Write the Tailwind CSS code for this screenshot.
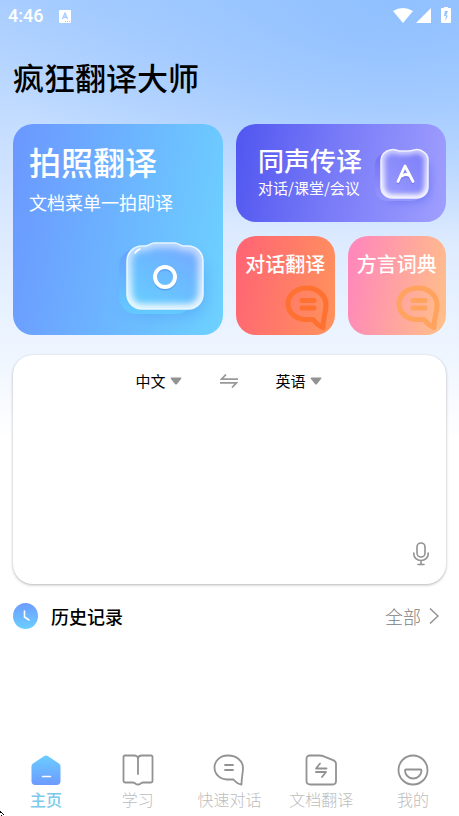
<!DOCTYPE html>
<html lang="zh-CN">
<head>
  <meta charset="UTF-8" />
  <meta name="viewport" content="width=device-width, initial-scale=1.0"/>
  <title>疯狂翻译大师</title>
  <script src="https://cdn.jsdelivr.net/npm/@tailwindcss/browser@4"></script>
</head>
<body class="bg-white font-['Noto_Sans_CJK_SC',sans-serif] text-black">
  <div class="relative flex min-h-screen flex-col bg-[radial-gradient(ellipse_90%_30%_at_85%_0%,#90c0ff_0%,#90c0ff00_100%),linear-gradient(180deg,#a9ceff_0px,#bfdaff_100px,#dceaff_230px,#eef5ff_350px,#ffffff_440px)]">

    <!-- Status bar -->
    <header class="flex h-8 items-center justify-between pr-2 pl-2 text-white">
      <div class="flex items-center gap-4">
        <span class="font-[Roboto,sans-serif] text-lg font-medium">4:46</span>
        <svg class="h-[13px] w-3" viewBox="0 0 12 13" aria-hidden="true">
          <rect width="12" height="13" rx="1" fill="#fff"/>
          <path d="M3.4 9 6 3.2 8.6 9M4.300 7.200h3.400" fill="none" stroke="#a9ccff" stroke-width="1.400"/>
          <path d="M6 11.500h1M8 11.500h1M10 11.500h1" stroke="#a9ccff"/>
        </svg>
      </div>
      <svg class="h-[18px] w-[58px]" viewBox="0 1 58 18" fill="#fff" aria-hidden="true">
        <path d="M0 5Q10-1 20 5L10 17Z"/>
        <path d="M23 17 38 2v15Z"/>
        <path fill-rule="evenodd" d="M51 0h4v2h2a1 1 0 0 1 1 1v13a1 1 0 0 1-1 1h-8a1 1 0 0 1-1-1V3a1 1 0 0 1 1-1h2ZM52 5 51 10h2l-1 5 3-5.500h-2L55 5Z"/>
      </svg>
    </header>

    <main class="flex flex-col px-[13px]">
      <h1 class="mt-6 text-[31px] leading-[42px] font-medium">疯狂翻译大师</h1>

      <!-- Feature cards -->
      <section class="mt-[26px] grid grid-cols-2 gap-[13px] text-white">
        <a href="#photo" class="relative flex h-[211px] flex-col rounded-[20px] bg-linear-[100deg,#6b97ff,#6dd2ff] px-4 pt-4">
          <span class="text-[32px] leading-[42px] font-medium">拍照翻译</span>
          <span class="mt-[6px] text-lg leading-7">文档菜单一拍即译</span>
          <svg class="absolute right-0 bottom-0 h-[115px] w-[120px]" viewBox="0 0 120 115" aria-hidden="true">
            <defs>
              <linearGradient id="camBack" x1="0" y1="0" x2="0" y2="1">
                <stop offset="0" stop-color="#67a2ff"/><stop offset="1" stop-color="#63caff"/>
              </linearGradient>
              <linearGradient id="camFace" x1=".9" y1="0" x2=".3" y2="1">
                <stop offset="0" stop-color="#7aa8ff"/><stop offset=".45" stop-color="#6cb8ff"/><stop offset="1" stop-color="#68ccff"/>
              </linearGradient>
              <linearGradient id="camEdge" x1="0" y1="0" x2="0" y2="1">
                <stop offset="0" stop-color="#fff" stop-opacity=".6"/><stop offset="1" stop-color="#fff"/>
              </linearGradient>
              <filter id="camShadow" x="-40%" y="-40%" width="180%" height="180%"><feGaussianBlur stdDeviation="8"/></filter>
              <filter id="camGlow"><feGaussianBlur stdDeviation="3.500"/></filter>
              <path id="camBody" d="M39 26h3c5 0 5-3 9-3h21c4 0 4 3 9 3h4a15 15 0 0 1 15 15v33a15 15 0 0 1-15 15H39a15 15 0 0 1-15-15V41a15 15 0 0 1 15-15Z"/>
              <clipPath id="camClip"><use href="#camBody"/></clipPath>
            </defs>
            <rect x="24" y="38" width="78" height="58" rx="18" fill="#4a90ef" opacity=".45" filter="url(#camShadow)"/>
            <rect x="16" y="29" width="74" height="65" rx="17" fill="url(#camBack)"/>
            <use href="#camBody" fill="url(#camFace)"/>
            <g clip-path="url(#camClip)">
              <use href="#camBody" fill="none" stroke="url(#camEdge)" stroke-width="9" filter="url(#camGlow)"/>
            </g>
            <use href="#camBody" fill="none" stroke="#e6f6ff" stroke-width="1.600"/>
            <path d="M32 33q2-3 5-4" stroke="#fff" stroke-width="1.500" stroke-linecap="round" fill="none"/>
            <circle cx="62" cy="58.500" r="10" fill="none" stroke="#4a8ff0" stroke-width="4" opacity=".6"/>
            <circle cx="62" cy="57" r="10" fill="none" stroke="#fff" stroke-width="4"/>
          </svg>
        </a>

        <div class="flex flex-col gap-[14px]">
          <a href="#interpret" class="relative flex h-[98px] flex-col rounded-[20px] bg-linear-[100deg,#5056f0,#7b7df8_50%,#a09fff] pt-[18px] pl-[22px]">
            <span class="text-[26px] leading-[36px] font-medium">同声传译</span>
            <span class="text-[15px] leading-5 whitespace-nowrap">对话/课堂/会议</span>
            <svg class="absolute top-2 right-0 h-[80px] w-[80px]" viewBox="0 0 80 80" aria-hidden="true">
              <defs>
                <linearGradient id="aFace" x1="1" y1="0" x2="0" y2="1">
                  <stop offset="0" stop-color="#7a7cf8"/><stop offset="1" stop-color="#9d9dff"/>
                </linearGradient>
                <linearGradient id="aBack" x1="0" y1="0" x2="0" y2="1">
                  <stop offset="0" stop-color="#6f70f5"/><stop offset="1" stop-color="#9696ff"/>
                </linearGradient>
                <linearGradient id="aEdge" x1="0" y1="0" x2="0" y2="1">
                  <stop offset="0" stop-color="#fff" stop-opacity=".65"/><stop offset="1" stop-color="#fff"/>
                </linearGradient>
                <filter id="aShadow" x="-40%" y="-40%" width="180%" height="180%"><feGaussianBlur stdDeviation="5"/></filter>
                <filter id="aGlow"><feGaussianBlur stdDeviation="2.500"/></filter>
                <path id="aBody" d="M24 18q3-1 6 0 2 1 5 1h7q3 0 6-1 3-1 6 0c5 2 8 6 8 10v27a11 11 0 0 1-11 11H26a11 11 0 0 1-11-11V28c0-5 4-9 9-10Z"/>
                <clipPath id="aClip"><use href="#aBody"/></clipPath>
              </defs>
              <rect x="18" y="28" width="46" height="42" rx="12" fill="#5568ee" opacity=".55" filter="url(#aShadow)"/>
              <rect x="9" y="21" width="48" height="48" rx="12" fill="url(#aBack)"/>
              <use href="#aBody" fill="url(#aFace)"/>
              <g clip-path="url(#aClip)">
                <use href="#aBody" fill="none" stroke="url(#aEdge)" stroke-width="7" filter="url(#aGlow)"/>
              </g>
              <use href="#aBody" fill="none" stroke="#f0efff" stroke-width="1.500"/>
              <g fill="none" stroke-linecap="round" stroke-linejoin="round" stroke-width="2.800">
                <path d="m32 51 7-15.500L47 51M36 45.500q4-3 8 0" stroke="#6464e6" opacity=".5"/>
                <path d="m32 49.500 7-15.500L47 49.500M36 44q4-3 8 0" stroke="#fff"/>
              </g>
            </svg>
          </a>

          <div class="grid grid-cols-2 gap-[13px]">
            <a href="#dialog" class="relative h-[99px] rounded-[20px] bg-linear-[100deg,#ff6375,#ff935c] pt-[13px] text-center text-xl leading-[30px] font-medium whitespace-nowrap">
              对话翻译
              <svg class="absolute right-[6px] bottom-1 h-[46px] w-[44px]" viewBox="0 0 44 46" fill="none" stroke="#ff7130" stroke-linecap="round" stroke-linejoin="round" aria-hidden="true">
                <path d="M38 42.500C33 41 30 36 28 34.500H19C10 33.500 3 27 3 19 3 9 12 3 22 3s19 7 19 17c0 8-3 12-3 22.500Z" stroke-width="5"/>
                <path d="M17 15.500h12M17 23h12" stroke-width="5"/>
              </svg>
            </a>
            <a href="#dialect" class="relative h-[99px] rounded-[20px] bg-linear-[100deg,#ff84bd,#ffc187] pt-[13px] text-center text-xl leading-[30px] font-medium whitespace-nowrap">
              方言词典
              <svg class="absolute right-[6px] bottom-1 h-[46px] w-[44px]" viewBox="0 0 44 46" fill="none" stroke="#ffa35e" stroke-linecap="round" stroke-linejoin="round" aria-hidden="true">
                <path d="M38 42.500C33 41 30 36 28 34.500H19C10 33.500 3 27 3 19 3 9 12 3 22 3s19 7 19 17c0 8-3 12-3 22.500Z" stroke-width="5"/>
                <path d="M17 15.500h12M17 23h12" stroke-width="5"/>
              </svg>
            </a>
          </div>
        </div>
      </section>

      <!-- Translate box -->
      <section class="mt-5 flex h-[229px] flex-col rounded-[20px] bg-white shadow-[0_1px_3px_rgba(0,0,0,0.3)]">
        <div class="flex items-center justify-center gap-[38px] pt-3 pr-[2px]">
          <button type="button" class="flex items-center gap-1 text-[15px] leading-7">
            中文
            <svg class="h-2 w-3" viewBox="0 0 12 8" aria-hidden="true"><path d="M1.500.5h9q1.500 0 .7 1.300L7 7q-1 1-2 0L.8 1.800Q0 .5 1.500.5Z" fill="#929292"/></svg>
          </button>
          <button type="button" aria-label="交换语言">
            <svg class="h-[14px] w-[18px]" viewBox="0 0 18 14" fill="none" stroke="#999" stroke-width="1.800" aria-hidden="true">
              <path d="M6 .5 1.500 5.200H18M0 8.800h16.500L12 13.500"/>
            </svg>
          </button>
          <button type="button" class="flex items-center gap-1 text-[15px] leading-7">
            英语
            <svg class="h-2 w-3" viewBox="0 0 12 8" aria-hidden="true"><path d="M1.500.5h9q1.500 0 .7 1.300L7 7q-1 1-2 0L.8 1.800Q0 .5 1.500.5Z" fill="#929292"/></svg>
          </button>
        </div>
        <textarea aria-label="翻译内容" class="w-full flex-1 resize-none px-4 py-2 text-base outline-none"></textarea>
        <button type="button" aria-label="语音输入" class="mr-[17px] mb-[18px] self-end">
          <svg class="h-6 w-4" viewBox="0 0 16 24" fill="none" stroke="#929292" stroke-width="1.600" stroke-linecap="round" aria-hidden="true">
            <rect x="4" y="1" width="8" height="14" rx="4"/>
            <path d="M.8 11v1a7.200 6.500 0 0 0 14.400 0v-1M8 18.500V22.500M5 22.500h6"/>
          </svg>
        </button>
      </section>

      <!-- History -->
      <section class="mt-[19px] flex items-center justify-between pr-[7px]">
        <div class="flex items-center gap-[13px]">
          <svg class="h-[26px] w-[25px]" viewBox="0 0 25 26" aria-hidden="true">
            <defs>
              <linearGradient id="clock" x1="0" y1="0" x2="0" y2="1"><stop offset="0" stop-color="#6d9bff"/><stop offset="1" stop-color="#6acfff"/></linearGradient>
            </defs>
            <ellipse cx="12.500" cy="13" rx="12.500" ry="13" fill="url(#clock)"/>
            <path d="M11.500 8v6l4.500 3" fill="none" stroke="#fff" stroke-width="1.600" stroke-linecap="round"/>
          </svg>
          <h2 class="text-lg leading-[26px] font-medium">历史记录</h2>
        </div>
        <a href="#history" class="flex items-center gap-2 text-lg leading-[26px] font-light text-[#808080]">
          全部
          <svg class="h-4 w-[10px]" viewBox="0 0 10 16" fill="none" stroke="#929292" stroke-width="1.500" aria-hidden="true"><path d="m1 .5 8 7.500-8 7.500"/></svg>
        </a>
      </section>
    </main>

    <!-- Tab bar -->
    <nav class="mt-auto grid grid-cols-5 pt-4 pb-[5px] text-base leading-6 font-light whitespace-nowrap text-[#bdbdbd]">
      <a href="#home" class="flex flex-col items-center gap-px font-medium text-[#7cc9ec]">
        <svg class="h-8 w-8" viewBox="0 0 32 32" aria-hidden="true">
          <defs>
            <linearGradient id="home" x1="0" y1="0" x2="0" y2="1"><stop offset="0" stop-color="#6bcdff"/><stop offset="1" stop-color="#6c9aff"/></linearGradient>
          </defs>
          <path d="M13.500 2.500q2.500-1.800 5 0L29 9.500q1.500 1 1.500 3V27q0 4-4 4h-21q-4 0-4-4V12.500q0-2 1.500-3Z" fill="url(#home)"/>
          <path d="M12.500 22.500h8" stroke="#fff" stroke-width="1.500" stroke-linecap="round"/>
        </svg>
        主页
      </a>
      <a href="#study" class="flex flex-col items-center gap-px">
        <svg class="h-8 w-8" viewBox="0 0 32 32" fill="none" stroke="#929292" stroke-width="1.800" stroke-linecap="round" stroke-linejoin="round" aria-hidden="true">
          <path d="M16 20V5q0-3.500-4-3.500H3Q1.500 1.500 1.500 3v24q0 1.500 1.500 1.500h8q1.500 0 2.500 1.200 2.500 1.600 5 0Q19.500 28.500 21 28.500h8q1.500 0 1.500-1.500V3q0-1.500-1.500-1.500h-9q-4 0-4 3.500"/>
        </svg>
        学习
      </a>
      <a href="#quick" class="flex flex-col items-center gap-px">
        <svg class="h-8 w-8" viewBox="0 0 32 32" fill="none" stroke="#929292" stroke-width="1.800" stroke-linecap="round" stroke-linejoin="round" aria-hidden="true">
          <path d="M28.500 30.500C24.500 30 22.500 28 20.500 25.500H14C7 25.500 1.500 20 1.500 13.500S7 1.500 14.500 1.500h1C23 1.500 30 6.500 30 14c0 5-1.500 9-1.500 16.500ZM12 11h8M12 16h8"/>
        </svg>
        快速对话
      </a>
      <a href="#docs" class="flex flex-col items-center gap-px">
        <svg class="h-8 w-8" viewBox="0 0 32 32" fill="none" stroke="#929292" stroke-width="1.800" stroke-linecap="round" stroke-linejoin="round" aria-hidden="true">
          <path d="M5 1.500h9q3 0 6 1.300l7.500 3Q31 7 31 10v17q0 3.500-3.500 3.500h-22Q1.500 30.500 1.500 27V5q0-3.500 3.500-3.500Z"/>
          <path d="m15 9.500-4 5h10.500M11 18h10l-4 5"/>
        </svg>
        文档翻译
      </a>
      <a href="#me" class="flex flex-col items-center gap-px">
        <svg class="h-8 w-8" viewBox="0 0 32 32" fill="none" stroke="#929292" stroke-width="1.800" stroke-linejoin="round" aria-hidden="true">
          <circle cx="16" cy="16" r="14.500"/>
          <path d="M9 15.500h14.500q1 0 1 1c0 4-3.500 8-8.300 8S8 20.500 8 16.500q0-1 1-1Z"/>
        </svg>
        我的
      </a>
    </nav>

    <svg class="absolute bottom-0 left-0 h-[5px] w-1" viewBox="0 0 4 5" fill="#000" aria-hidden="true"><path d="M0 0h1v1h1v1H0ZM2 2h1v1H2ZM3 3h1v1H3ZM1 4h1v1H1Z"/></svg>
  </div>
</body>
</html>
